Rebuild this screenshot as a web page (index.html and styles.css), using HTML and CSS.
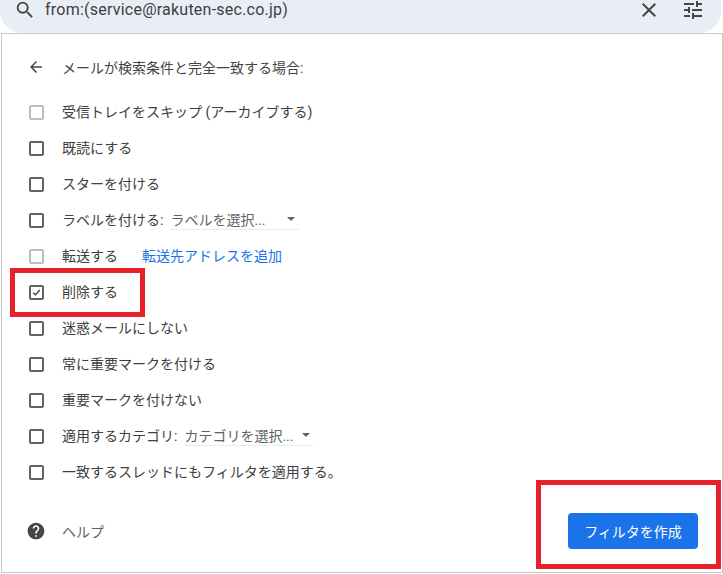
FILE: index.html
```html
<!DOCTYPE html>
<html lang="ja">
<head>
<meta charset="utf-8">
<title>フィルタを作成</title>
<link rel="stylesheet" href="styles.css">
</head>
<body>
<div class="searchbar">
  <svg class="icon-search" viewBox="0 0 24 24"><path d="M15.5 14h-.79l-.28-.27A6.47 6.47 0 0 0 16 9.5 6.5 6.5 0 1 0 9.5 16c1.61 0 3.09-.59 4.23-1.57l.27.28v.79l5 4.99L20.49 19l-4.99-5zm-6 0C7.01 14 5 11.99 5 9.5S7.01 5 9.5 5 14 7.01 14 9.5 11.99 14 9.5 14z"/></svg>
  <span class="query">from:(service@rakuten-sec.co.jp)</span>
  <svg class="icon-close" viewBox="0 0 24 24"><path d="M19 6.41 17.59 5 12 10.59 6.41 5 5 6.41 10.59 12 5 17.59 6.41 19 12 13.41 17.59 19 19 17.59 13.41 12z"/></svg>
  <svg class="icon-tune" viewBox="0 0 24 24"><path d="M3 17v2h6v-2H3zM3 5v2h10V5H3zm10 16v-2h8v-2h-8v-2h-2v6h2zM7 9v2H3v2h4v2h2V9H7zm14 4v-2H11v2h10zm-6-4h2V7h4V5h-4V3h-2v6z"/></svg>
</div>
<main class="panel">
  <header class="heading">
    <svg class="icon-back" viewBox="0 0 24 24"><path d="M20 11H7.83l5.59-5.59L12 4l-8 8 8 8 1.41-1.41L7.83 13H20z"/></svg>
    <span>メールが検索条件と完全一致する場合:</span>
  </header>
  <div class="options">
    <div class="row"><span class="box box-muted"></span><span>受信トレイをスキップ (アーカイブする)</span></div>
    <div class="row"><span class="box"></span><span>既読にする</span></div>
    <div class="row"><span class="box"></span><span>スターを付ける</span></div>
    <div class="row"><span class="box"></span><span>ラベルを付ける:</span>
      <span class="select select-label"><span>ラベルを選択...</span><i class="caret"></i></span></div>
    <div class="row"><span class="box box-muted"></span><span>転送する</span><a class="link" href="#">転送先アドレスを追加</a></div>
    <div class="row"><span class="box box-checked"><svg viewBox="0 0 14 14"><path d="M2.8 7.2 5.8 10 11.2 3.8"/></svg></span><span>削除する</span></div>
    <div class="row"><span class="box"></span><span>迷惑メールにしない</span></div>
    <div class="row"><span class="box"></span><span>常に重要マークを付ける</span></div>
    <div class="row"><span class="box"></span><span>重要マークを付けない</span></div>
    <div class="row"><span class="box"></span><span>適用するカテゴリ:</span>
      <span class="select select-category"><span>カテゴリを選択...</span><i class="caret"></i></span></div>
    <div class="row"><span class="box"></span><span>一致するスレッドにもフィルタを適用する。</span></div>
  </div>
  <footer class="actions">
    <div class="help">
      <svg class="icon-help" viewBox="0 0 24 24"><path d="M12 2C6.48 2 2 6.48 2 12s4.48 10 10 10 10-4.48 10-10S17.52 2 12 2zm1 17h-2v-2h2v2zm2.07-7.75-.9.92C13.45 12.9 13 13.5 13 15h-2v-.5c0-1.1.45-2.1 1.17-2.83l1.24-1.26c.37-.36.59-.86.59-1.41 0-1.1-.9-2-2-2s-2 .9-2 2H8c0-2.21 1.79-4 4-4s4 1.79 4 4c0 .88-.36 1.68-.93 2.25z"/></svg>
      <span>ヘルプ</span>
    </div>
    <button class="create" type="button">フィルタを作成</button>
  </footer>
</main>
<div class="mark mark-delete"></div>
<div class="mark mark-create"></div>
</body>
</html>
```
FILE: styles.css
```css
* { box-sizing: border-box; }
html, body { margin: 0; padding: 0; }
body {
  position: relative;
  width: 723px;
  height: 574px;
  overflow: hidden;
  background: #fff;
  font-family: "Roboto", "Noto Sans CJK JP", sans-serif;
  font-size: 14px;
  color: #3c4043;
}
.searchbar {
  display: flex;
  align-items: center;
  height: 33px;
  width: 721px;
  padding: 0 16px 13px 14px;
  background: #e9eef6;
  border-radius: 0 0 22px 22px;
}
.icon-search { width: 22px; height: 22px; fill: #444746; flex: none; }
.query {
  margin-left: 9px;
  flex: 1;
  font-size: 16px;
  line-height: 20px;
  color: #3c4043;
  letter-spacing: 0.23px;
}
.icon-close { width: 24px; height: 24px; fill: #444746; flex: none; margin-right: 20px; }
.icon-tune { width: 24px; height: 24px; fill: #444746; flex: none; }
.panel {
  display: flex;
  flex-direction: column;
  margin-left: 1px;
  width: 722px;
  height: 540px;
  border: 1px solid #c8c8c8;
  background: #fff;
}
.heading {
  display: flex;
  align-items: center;
  height: 20px;
  margin-top: 23px;
  padding-left: 25px;
  gap: 17px;
  color: #444;
}
.icon-back { width: 18px; height: 18px; fill: #444746; flex: none; }
.options {
  display: flex;
  flex-direction: column;
  margin-top: 16px;
}
.row {
  display: flex;
  align-items: center;
  height: 36px;
  padding-left: 27px;
  color: #3c4043;
  white-space: nowrap;
}
.box {
  display: flex;
  align-items: center;
  justify-content: center;
  width: 15px;
  height: 15px;
  margin-top: 2px;
  margin-right: 18px;
  border: 2px solid #5f6368;
  border-radius: 2px;
  flex: none;
}
.box-muted { border-color: #bdbdbd; }
.box-checked svg { width: 11px; height: 11px; fill: none; stroke: #444; stroke-width: 1.8; }
.select {
  display: flex;
  align-items: center;
  justify-content: space-between;
  height: 22px;
  margin-left: 7px;
  border-bottom: 1px solid #ebebeb;
  color: #5f6368;
}
.select-label { width: 129px; padding-right: 4px; }
.select-category { width: 129px; padding-right: 3px; }
.caret {
  width: 0;
  height: 0;
  border-left: 4px solid transparent;
  border-right: 4px solid transparent;
  border-top: 4px solid #5f6368;
}
.link {
  margin-left: 24px;
  color: #1a73e8;
  text-decoration: none;
}
.actions {
  display: flex;
  align-items: center;
  justify-content: space-between;
  margin-top: 24px;
  padding: 0 24px 0 24px;
}
.help {
  display: flex;
  align-items: center;
  gap: 16px;
  color: #5f6368;
}
.icon-help { width: 20px; height: 20px; fill: #444746; flex: none; }
.create {
  width: 130px;
  height: 36px;
  border: 0;
  border-radius: 4px;
  background: #1a73e8;
  color: #fff;
  font: inherit;
}
.mark {
  position: absolute;
  border: 5px solid #e8202a;
}
.mark-delete { left: 10px; top: 268px; width: 135px; height: 49px; }
.mark-create { left: 536px; top: 480px; width: 185px; height: 89px; }
```
